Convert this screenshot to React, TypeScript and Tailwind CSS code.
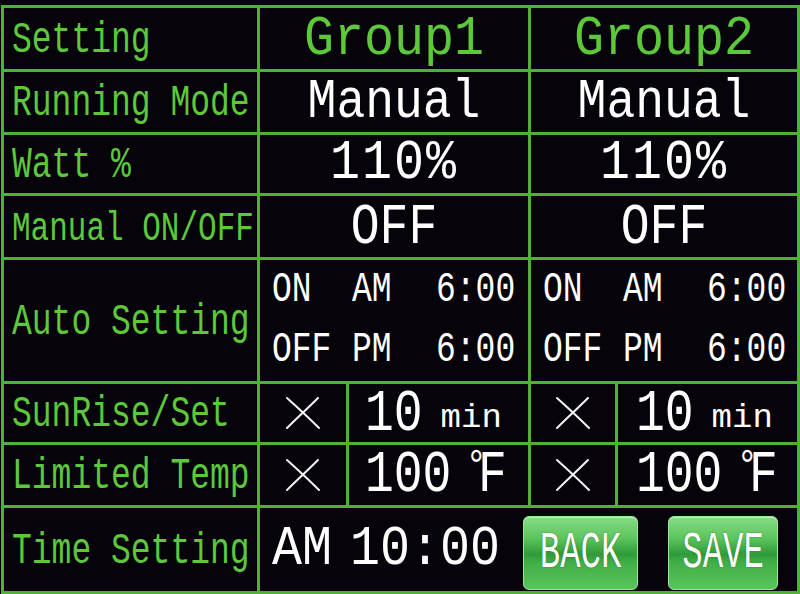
const LINE = 'bg-[#4fb236]';

function Cross() {
  return (
    <svg width="36" height="34" viewBox="0 0 36 34" fill="none" stroke="#f4f4f4" strokeWidth="2" strokeLinecap="round">
      <path d="M2 2 C 12 11, 24 22, 34 32" />
      <path d="M33 2 C 24 11, 12 22, 2 32" />
    </svg>
  );
}

function Label({ text, size = 'text-[33px]' }: { text: string; size?: string }) {
  return (
    <div className="bg-[#06040a] flex items-center pl-[8px] pt-[3px]">
      <span className={`inline-block whitespace-pre text-[#5cc83a] leading-none scale-y-[1.33] ${size}`}>{text}</span>
    </div>
  );
}

function Value({ text, cls }: { text: string; cls: string }) {
  return (
    <div className="col-span-2 bg-[#06040a] flex items-center justify-center">
      <span className={`inline-block whitespace-pre leading-none ${cls}`}>{text}</span>
    </div>
  );
}

function AutoCell() {
  const rows = [
    ['ON', 'AM', '6:00'],
    ['OFF', 'PM', '6:00'],
  ];
  return (
    <div className="col-span-2 bg-[#06040a] flex flex-col justify-center px-[12px] text-white text-[33px] leading-none">
      {rows.map((r, i) => (
        <div key={i} className="h-[62px] grid grid-cols-[80px_84px_1fr] items-center">
          {r.map((w, j) => (
            <span key={j} className="inline-block scale-y-[1.28] whitespace-pre">{w}</span>
          ))}
        </div>
      ))}
    </div>
  );
}

function Fahrenheit() {
  return (
    <span className="inline-flex items-start ml-[14px] text-[48px] scale-y-[1.25] whitespace-pre">
      <span className="inline-block -mr-[9px] text-[36px] leading-none">°</span>
      <span>F</span>
    </span>
  );
}

function GreenButton({ text }: { text: string }) {
  return (
    <button className="w-full h-[74px] rounded-[6px] border border-[#9be49b] bg-[linear-gradient(to_bottom,#86dc86_0%,#5cc45c_30%,#2f9a3a_52%,#3fae46_62%,#5cc45c_100%)] shadow-[inset_0_1px_0_rgba(255,255,255,0.5)] flex items-center justify-center">
      <span className="inline-block text-white text-[34px] leading-none scale-y-[1.5] [text-shadow:0_0_1px_#1e5e22]">{text}</span>
    </button>
  );
}

export default function App() {
  return (
    <div className="w-[800px] h-[594px] bg-[#06040a] pt-[5px] pl-[1px] overflow-hidden" style={{ fontFamily: '"Liberation Mono", "DejaVu Sans Mono", monospace' }}>
      <div className={`${LINE} p-[3px] grid gap-[3px] grid-cols-[253px_86px_179px_84px_179px] grid-rows-[61px_60px_58px_61px_121px_58px_60px_83px] w-[799px]`}>
        {/* header */}
        <Label text="Setting" />
        <Value text="Group1" cls="text-[#5cc83a] text-[50px] scale-y-[1.12]" />
        <Value text="Group2" cls="text-[#5cc83a] text-[50px] scale-y-[1.12]" />

        <Label text="Running Mode" />
        <Value text="Manual" cls="text-white text-[48px] scale-y-[1.17]" />
        <Value text="Manual" cls="text-white text-[48px] scale-y-[1.17]" />

        <Label text="Watt %" />
        <Value text="110%" cls="text-white text-[50px] tracking-[2px] scale-y-[1.1]" />
        <Value text="110%" cls="text-white text-[50px] tracking-[2px] scale-y-[1.1]" />

        <Label text="Manual ON/OFF" size="text-[31px]" />
        <Value text="OFF" cls="text-white text-[48px] scale-y-[1.2]" />
        <Value text="OFF" cls="text-white text-[48px] scale-y-[1.2]" />

        <Label text="Auto Setting" />
        <AutoCell />
        <AutoCell />

        {/* sunrise */}
        <Label text="SunRise/Set" />
        <div className="bg-[#06040a] flex items-center justify-center"><Cross /></div>
        <div className="bg-[#06040a] flex items-baseline pl-[16px] pt-[6px] text-white leading-none">
          <span className="inline-block text-[48px] scale-y-[1.22]">10</span>
          <span className="ml-[18px] text-[34px]">min</span>
        </div>
        <div className="bg-[#06040a] flex items-center justify-center"><Cross /></div>
        <div className="bg-[#06040a] flex items-baseline pl-[18px] pt-[6px] text-white leading-none">
          <span className="inline-block text-[48px] scale-y-[1.22]">10</span>
          <span className="ml-[18px] text-[34px]">min</span>
        </div>

        {/* temp */}
        <Label text="Limited Temp" />
        <div className="bg-[#06040a] flex items-center justify-center"><Cross /></div>
        <div className="bg-[#06040a] flex items-center pl-[16px] text-white leading-none">
          <span className="inline-block text-[48px] scale-y-[1.25]">100</span>
          <Fahrenheit />
        </div>
        <div className="bg-[#06040a] flex items-center justify-center"><Cross /></div>
        <div className="bg-[#06040a] flex items-center pl-[18px] text-white leading-none">
          <span className="inline-block text-[48px] scale-y-[1.25]">100</span>
          <Fahrenheit />
        </div>

        {/* time */}
        <Label text="Time Setting" />
        <div className="col-span-4 bg-[#06040a] flex items-center pl-[12px] text-white leading-none">
          <span className="inline-block text-[50px] scale-y-[1.1]">AM</span>
          <span className="inline-block ml-[18px] text-[50px] scale-y-[1.1]">10:00</span>
          <div className="ml-[23px] mt-[7px] w-[115px]"><GreenButton text="BACK" /></div>
          <div className="ml-[30px] mt-[7px] w-[110px]"><GreenButton text="SAVE" /></div>
        </div>
      </div>
    </div>
  );
}
